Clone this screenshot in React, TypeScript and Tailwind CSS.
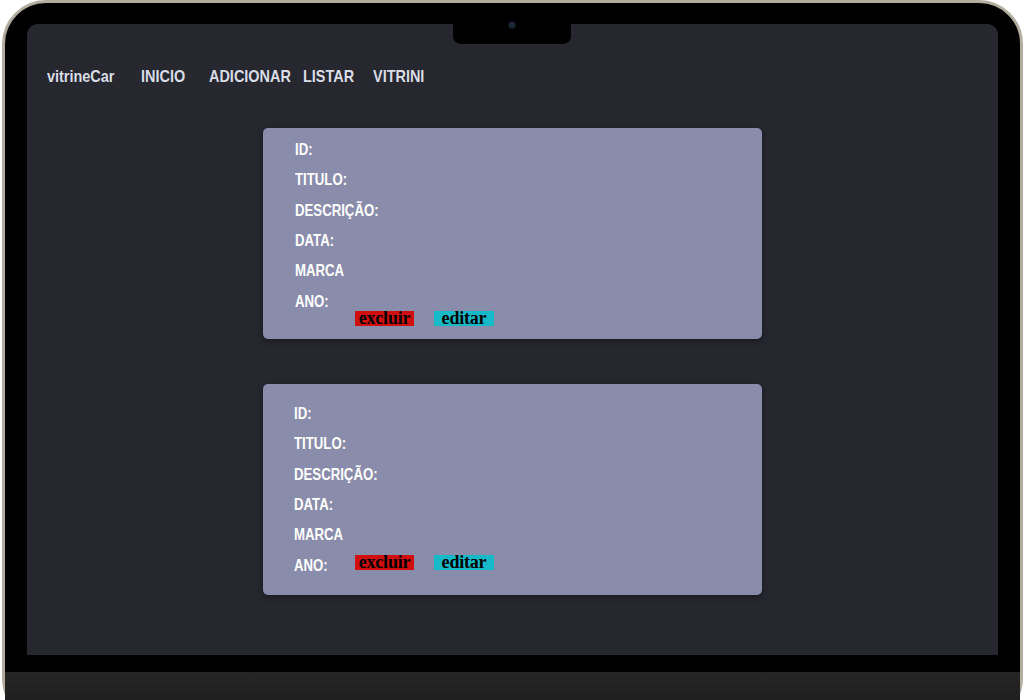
import React from 'react';

const sans = "font-['Liberation_Sans',Arial,sans-serif]";

const navItems = [
  { label: 'vitrineCar', w: 'w-[94px]' },
  { label: 'INICIO', w: 'w-[68px]' },
  { label: 'ADICIONAR', w: 'w-[94px]' },
  { label: 'LISTAR', w: 'w-[70px]' },
  { label: 'VITRINI', w: 'w-[70px]' },
];

const fields = ['ID:', 'TITULO:', 'DESCRIÇÃO:', 'DATA:', 'MARCA'];

const Label: React.FC<{ text: string }> = ({ text }) => (
  <span className="inline-block origin-left scale-x-[0.8] whitespace-nowrap">{text}</span>
);

const Buttons: React.FC = () => (
  <div className="flex items-center gap-[20px] font-['Liberation_Serif','DejaVu_Serif',serif] text-[18px] font-bold text-black">
    <button className="h-[15px] w-[59px] bg-[#d10f0f] text-center leading-[15px] tracking-[-0.2px]">excluir</button>
    <button className="h-[15px] w-[60px] bg-[#16b9c8] text-center leading-[15px] tracking-[-0.2px]">editar</button>
  </div>
);

interface CarCardProps {
  wrapButtons?: boolean;
}

const CarCard: React.FC<CarCardProps> = ({ wrapButtons = false }) => (
  <div
    className={`mx-auto flex h-[211px] w-[499px] flex-col rounded-[5px] bg-[#8a8cab] shadow-[0_2px_6px_rgba(0,0,0,0.45)] ${
      wrapButtons ? 'pl-[32px] pt-[6px]' : 'pl-[31px] pt-[14px]'
    }`}
  >
    {fields.map((f) => (
      <div key={f} className="flex h-[30.4px] items-center text-[16.5px] font-bold text-white">
        <Label text={f} />
      </div>
    ))}
    {wrapButtons ? (
      <>
        <div className="flex h-[30px] items-center text-[16.5px] font-bold text-white">
          <Label text="ANO:" />
        </div>
        <div className="-mt-[5px] pl-[60px]">
          <Buttons />
        </div>
      </>
    ) : (
      <div className="flex h-[30px] items-center text-[16.5px] font-bold text-white">
        <span className="w-[61px]">
          <Label text="ANO:" />
        </span>
        <div className="-mt-[4px]">
          <Buttons />
        </div>
      </div>
    )}
  </div>
);

export default function App() {
  return (
    <div className={`h-[700px] w-[1025px] overflow-hidden bg-white ${sans}`}>
      <div className="mx-[2px] flex h-[722px] flex-col rounded-[44px] border-[3px] border-[#b2ad9f] bg-black pt-[21px]">
        {/* screen */}
        <div className="relative mx-[22px] h-[631px] rounded-t-[11px] bg-[#272730]">
          {/* notch */}
          <div className="absolute left-[426px] top-0 flex h-[20px] w-[118px] justify-center rounded-b-[8px] bg-black">
            <div className="mt-[-2px] h-[6px] w-[6px] rounded-full bg-[#1b2940] ring-1 ring-[#111]" />
          </div>

          <nav className="flex h-[106px] items-start pl-[20px] pt-[43px] text-[17px] font-bold text-[#d9dde6]">
            {navItems.map((n) => (
              <span key={n.label} className={`${n.w} leading-[20px]`}>
                <span className="inline-block origin-left scale-x-[0.85] whitespace-nowrap">{n.label}</span>
              </span>
            ))}
          </nav>

          <div className="-mt-[2px] flex flex-col gap-[45px]">
            <CarCard wrapButtons />
            <CarCard />
          </div>
        </div>

        {/* base */}
        <div className="mt-[17px] flex-1 bg-gradient-to-b from-[#262626] to-[#1b1b1b]" />
      </div>
    </div>
  );
}
